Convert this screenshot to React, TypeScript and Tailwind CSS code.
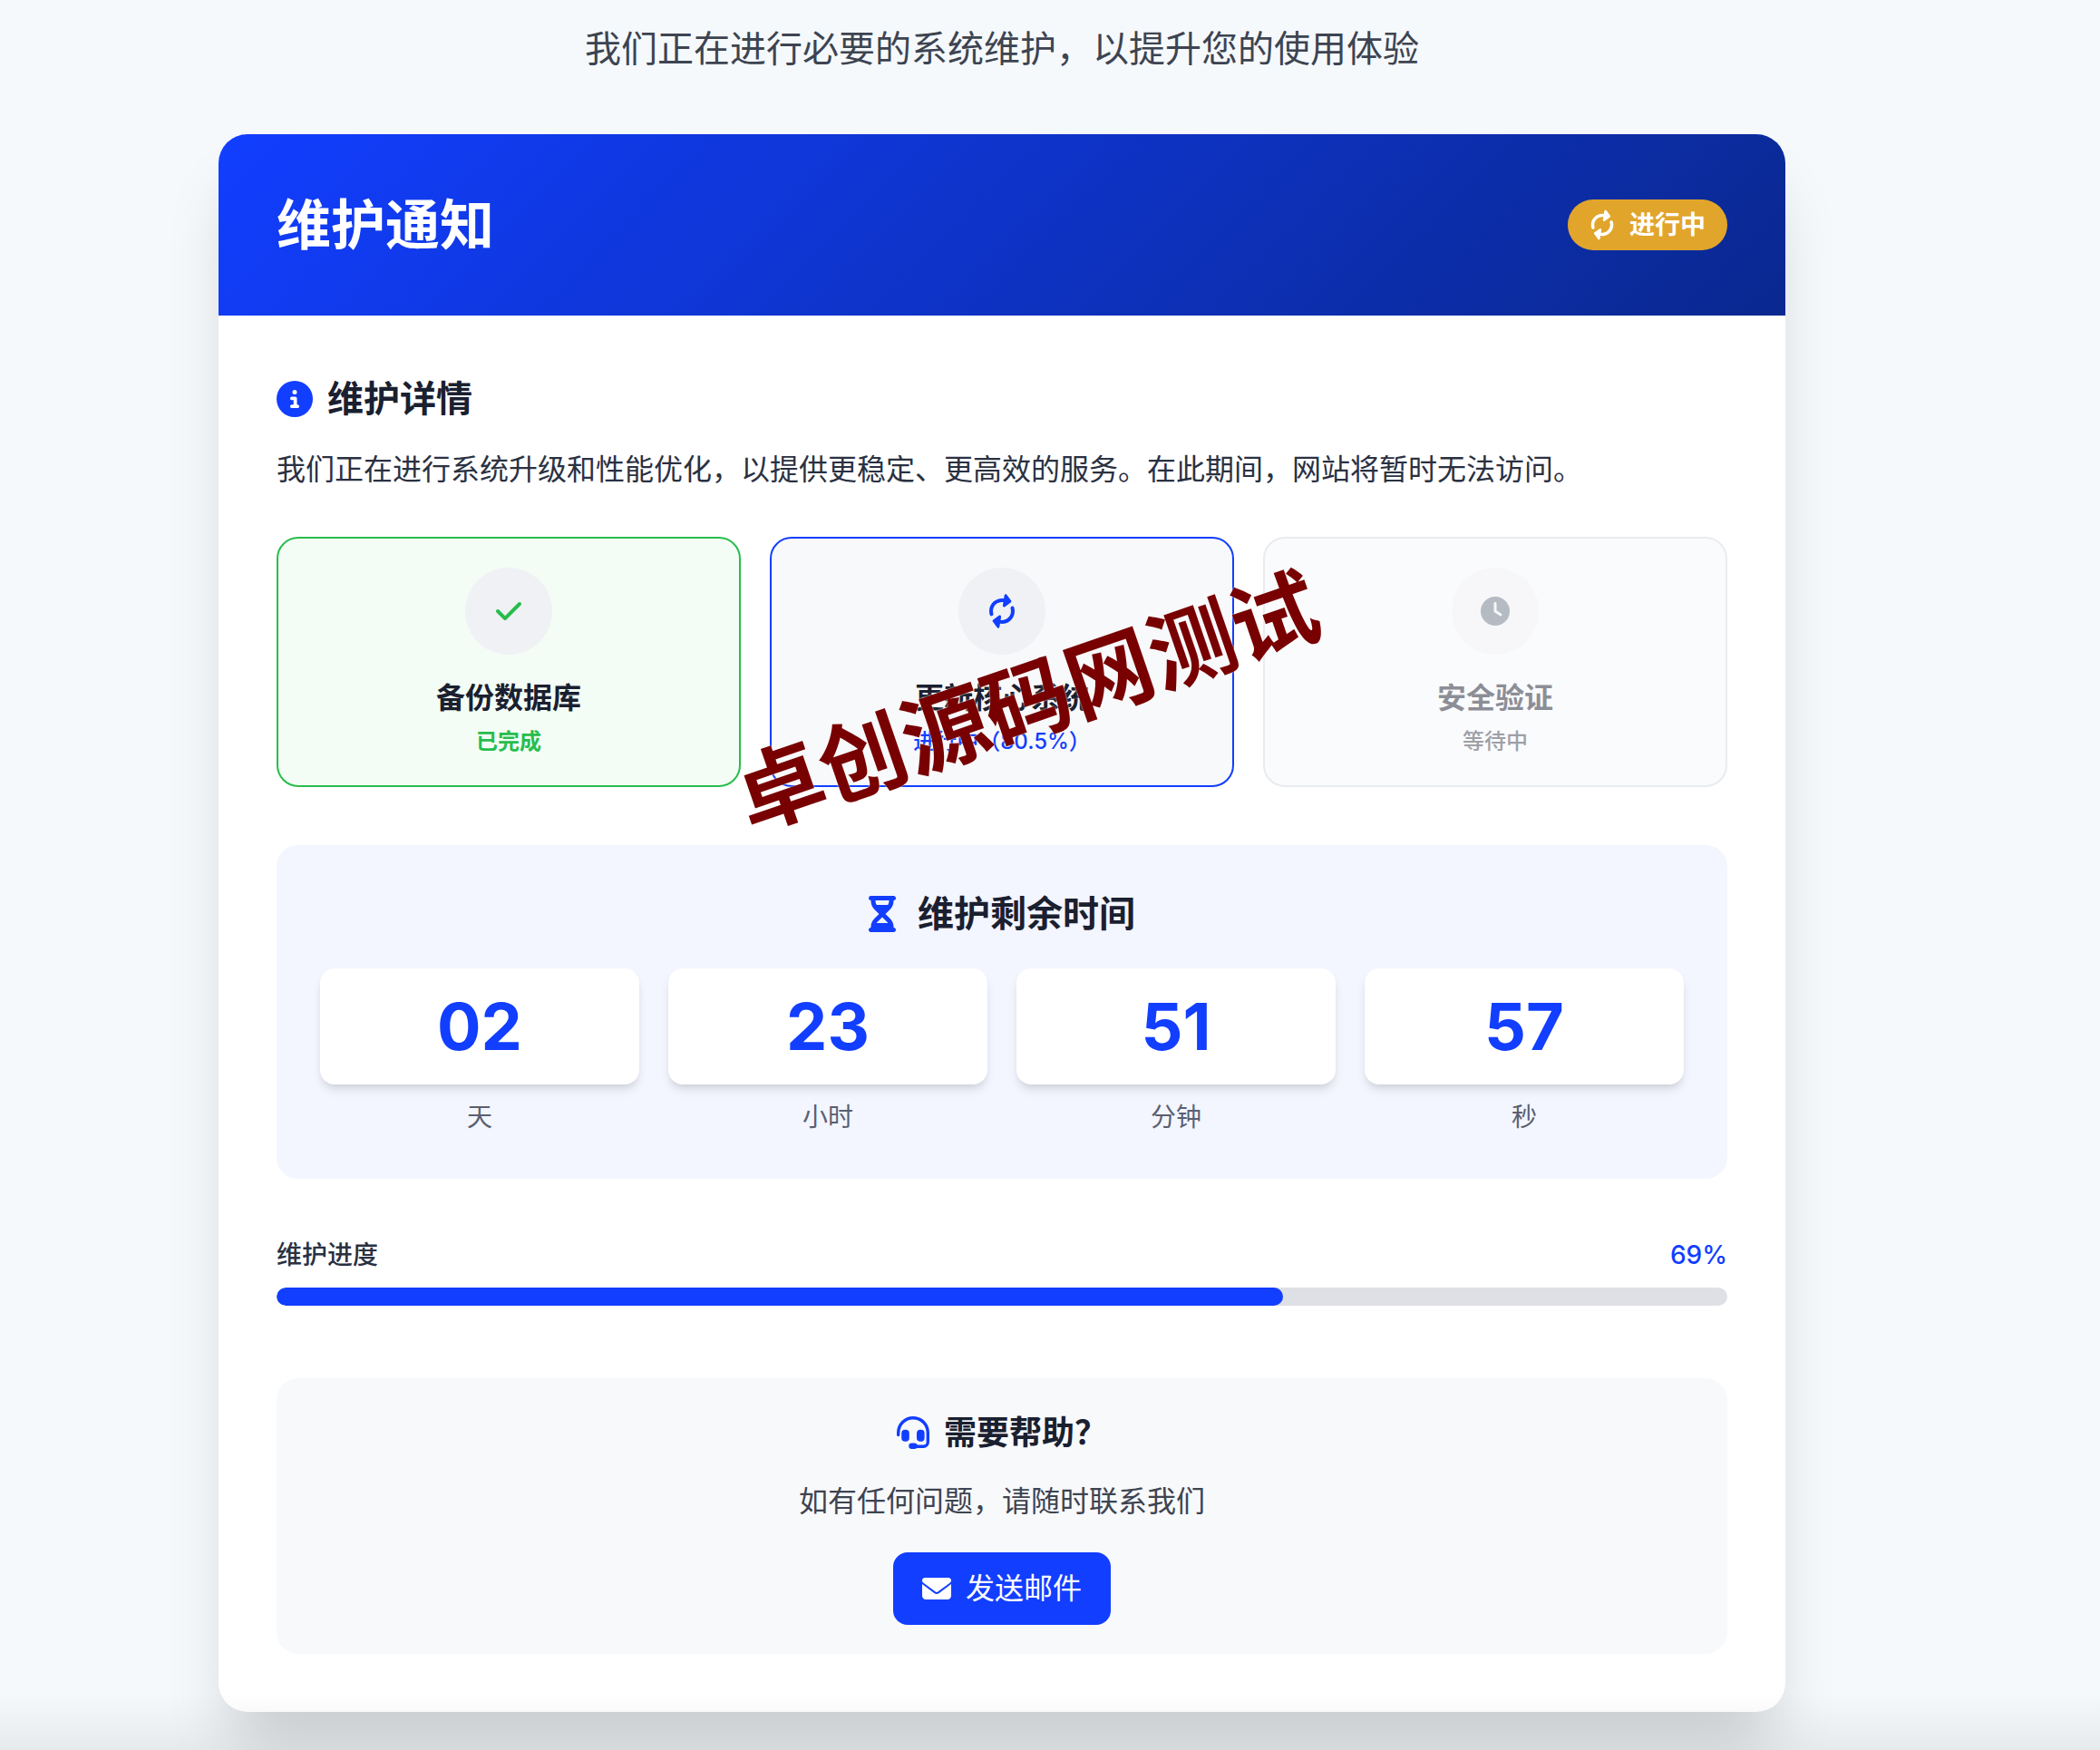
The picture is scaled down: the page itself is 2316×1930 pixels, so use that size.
import {
  FaCheck,
  FaCircleInfo,
  FaClock,
  FaEnvelope,
  FaHourglassHalf,
  FaRotate,
} from 'react-icons/fa6';

const steps = [
  {
    title: '备份数据库',
    status: '已完成',
    icon: <FaCheck className="size-8 text-[#27bd4d]" />,
    card: 'border-[#27bd4d] bg-[#f3fdf5]',
    statusClass: 'font-semibold text-[#27bd4d]',
  },
  {
    title: '更新核心系统',
    status: '进行中（80.5%）',
    icon: <FaRotate className="size-8 rotate-[-36deg] text-[#123eff]" />,
    card: 'border-[#123eff] bg-[#f8f9fb]',
    statusClass: 'font-medium text-[#123eff]',
  },
  {
    title: '安全验证',
    status: '等待中',
    icon: <FaClock className="size-8 text-[#6e7a88]" />,
    card: 'border-[#d5d9e0] bg-[#f6f8fb] opacity-50',
    statusClass: 'font-medium text-[#3f4252]',
  },
];

const countdown = [
  { value: '02', label: '天' },
  { value: '23', label: '小时' },
  { value: '51', label: '分钟' },
  { value: '57', label: '秒' },
];

const progress = 69.4;

const HeadsetIcon = () => (
  <svg viewBox="0 0 36 36" className="size-9 text-[#123eff]" fill="none" aria-hidden="true">
    <path
      d="M1.7 20.5V18a16.3 16.3 0 0 1 32.6 0v10.2a5 5 0 0 1-5 5H20"
      stroke="currentColor"
      strokeWidth="3.4"
      strokeLinecap="round"
    />
    <rect x="5.2" y="14.7" width="8.6" height="13" rx="4" fill="currentColor" />
    <rect x="22" y="14.7" width="8.6" height="13" rx="4" fill="currentColor" />
    <rect x="13.3" y="29.6" width="9.4" height="6.4" rx="3.2" fill="currentColor" />
  </svg>
);

const App: React.FC = () => {
  return (
    <div className="relative min-h-screen overflow-hidden bg-[#f5f9fc] pt-6 pb-[42px] pr-[106px] font-[Inter,'Noto_Sans_CJK_SC',sans-serif]">
      <p className="mb-16 text-center text-[40px] leading-[60px] text-[#3d4451]">
        我们正在进行必要的系统维护，以提升您的使用体验
      </p>

      <main className="mx-auto max-w-[1728px] overflow-hidden rounded-[32px] bg-white shadow-[0_50px_70px_-16px_rgba(0,0,0,0.17)]">
        {/* Header */}
        <header className="flex items-center justify-between bg-[linear-gradient(135deg,#123eff,#0a288f)] p-16 text-white">
          <h1 className="text-[60px] leading-[72px] font-bold">维护通知</h1>
          <div className="flex items-center gap-4 rounded-full bg-[#e1a52b] px-6 py-2 text-[28px] leading-10 font-semibold">
            <FaRotate className="size-7 rotate-[-36deg]" />
            <span>进行中</span>
          </div>
        </header>

        <div className="p-16">
          {/* Details */}
          <section>
            <h2 className="flex items-center gap-4 text-[40px] leading-[56px] font-semibold text-[#1a2030]">
              <FaCircleInfo className="size-10 text-[#123eff]" />
              维护详情
            </h2>
            <p className="mt-6 text-[32px] leading-[52px] text-[#2a3142]">
              我们正在进行系统升级和性能优化，以提供更稳定、更高效的服务。在此期间，网站将暂时无法访问。
            </p>

            <div className="relative mt-12">
              <div className="grid grid-cols-3 gap-8">
                {steps.map((step) => (
                  <div
                    key={step.title}
                    className={`flex flex-col items-center rounded-3xl border-2 p-8 ${step.card}`}
                  >
                    <div className="mb-6 flex size-24 items-center justify-center rounded-full bg-[#f0f1f5]">
                      {step.icon}
                    </div>
                    <h3 className="text-[32px] leading-[48px] font-semibold text-[#1a2030]">{step.title}</h3>
                    <p className={`mt-2 text-2xl ${step.statusClass}`}>{step.status}</p>
                  </div>
                ))}
              </div>

              {/* Watermark */}
              <div className="pointer-events-none absolute inset-0 flex translate-x-7 translate-y-11 items-center justify-center">
                <span className="rotate-[-19deg] text-8xl font-bold whitespace-nowrap text-[#780000] [text-shadow:0_0_2px_#fff]">
                  卓创源码网测试
                </span>
              </div>
            </div>
          </section>

          {/* Countdown */}
          <section className="mt-16 rounded-3xl bg-[#f3f5ff] p-12">
            <h2 className="flex items-center justify-center gap-6 text-[40px] leading-[56px] font-semibold text-[#1a2030]">
              <FaHourglassHalf className="h-10 w-[30px] text-[#123eff]" />
              维护剩余时间
            </h2>
            <div className="mt-8 grid grid-cols-4 gap-8 text-center">
              {countdown.map((item) => (
                <div key={item.label}>
                  <div className="rounded-2xl bg-white py-6 text-7xl leading-[80px] font-bold text-[#123eff] shadow-[0_8px_12px_-2px_rgba(0,0,0,0.1),0_4px_8px_-4px_rgba(0,0,0,0.1)]">
                    {item.value}
                  </div>
                  <p className="mt-4 text-[28px] leading-10 text-[#5a5f70]">{item.label}</p>
                </div>
              ))}
            </div>
          </section>

          {/* Progress */}
          <section className="mt-16">
            <div className="flex justify-between text-[28px] leading-10 font-medium">
              <span className="text-[#2a3142]">维护进度</span>
              <span className="text-[#123eff]">69%</span>
            </div>
            <div className="mt-4 h-5 overflow-hidden rounded-full bg-[#dfe0e6]">
              <div className="h-full rounded-full bg-[#123eff]" style={{ width: `${progress}%` }} />
            </div>
          </section>

          {/* Contact */}
          <section className="mt-20 flex flex-col items-center rounded-3xl bg-[#f8f9fb] p-8">
            <h2 className="flex items-center gap-4 text-4xl leading-[56px] font-semibold text-[#1a2030]">
              <HeadsetIcon />
              需要帮助？
            </h2>
            <p className="mt-6 text-[32px] leading-[48px] text-[#3d4451]">如有任何问题，请随时联系我们</p>
            <a
              href="#mail"
              className="mt-8 flex items-center gap-4 rounded-2xl bg-[#123eff] px-8 py-4 text-[32px] leading-[48px] text-white"
            >
              <FaEnvelope className="size-8" />
              发送邮件
            </a>
          </section>
        </div>
      </main>

      {/* Bottom fade */}
      <div className="pointer-events-none absolute inset-x-0 bottom-0 h-16 bg-gradient-to-b from-transparent to-black/6" />
    </div>
  );
};

export default App;
